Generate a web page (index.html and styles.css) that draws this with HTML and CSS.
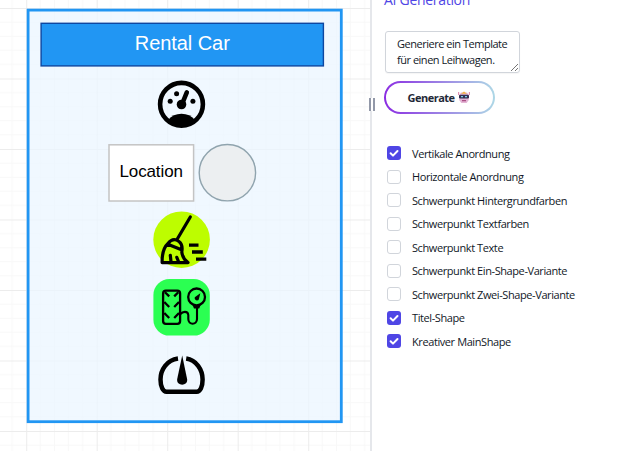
FILE: index.html
```html
<!DOCTYPE html>
<html lang="de">
<head>
<meta charset="utf-8">
<title>AI Generation</title>
<link rel="stylesheet" href="styles.css">
</head>
<body>
<main class="app">
  <section class="canvas">
    <svg class="diagram" width="370" height="451" viewBox="0 0 370 451">
      <defs>
        <pattern id="grid" x="26.2" y="8" width="70.5" height="70.5" patternUnits="userSpaceOnUse">
          <path d="M14.1 0V70.5M28.2 0V70.5M42.3 0V70.5M56.4 0V70.5M0 14.1H70.5M0 28.2H70.5M0 42.3H70.5M0 56.4H70.5" class="grid-minor"/>
          <path d="M.5 0V70.5M0 .5H70.5" class="grid-major"/>
        </pattern>
      </defs>
      <rect width="370" height="451" fill="url(#grid)"/>
      <rect class="card" x="28.1" y="10.1" width="313.2" height="411.6"/>
      <rect class="title-shape" x="41.1" y="23.3" width="282.3" height="42.6"/>
      <text class="title-text" x="182.3" y="49.8" textLength="95">Rental Car</text>

      <g>
        <circle cx="181.5" cy="104.3" r="21.4" fill="none" stroke="#000" stroke-width="4.6"/>
        <path d="M168.3 119.8Q173 113.7 181.5 113.7T194.7 119.8Q189.5 126.7 181.5 126.7T168.3 119.8Z"/>
        <circle cx="181.5" cy="104.5" r="4.8"/>
        <path d="M182.5 103 186.8 92.3" stroke="#000" stroke-width="4.6" stroke-linecap="round"/>
        <circle cx="170.2" cy="101.3" r="2.5"/><circle cx="176.6" cy="93.8" r="2.5"/><circle cx="192.9" cy="101.3" r="2.5"/>
      </g>

      <rect class="location" x="109" y="144.8" width="84.6" height="56.2"/>
      <text class="location-text" x="151.2" y="177.1" textLength="63.5">Location</text>
      <circle class="dot" cx="227.4" cy="172.7" r="28.2"/>

      <circle cx="181.6" cy="239.7" r="28.3" fill="#bdfd00"/>
      <g fill="none" stroke="#000" stroke-width="3.2" stroke-linecap="round" stroke-linejoin="round">
        <path d="M190.3 217 177 239.5"/>
        <path d="M168 243.5C171 239.5 175 238.5 179 241.5 182.5 244 182.5 248 181.8 252 182.4 257 184.6 260.2 188 262.6H162.1C162 254 163.5 247.5 168 243.5ZM167.8 244.3 181.5 249.8M170.3 255.3 171 261.5M176.8 257.3 178.5 261.5"/>
        <path d="M189 245.1H198.5M192 252H202.8M196 259.1H206.3" stroke-linecap="butt" stroke-width="3.4"/>
      </g>

      <rect x="153.4" y="279" width="56.4" height="56.6" rx="16" fill="#2bff52"/>
      <g fill="none" stroke="#000" stroke-width="2.3" stroke-linejoin="round">
        <rect x="163.1" y="290.7" width="17" height="33.2" rx="2.8"/>
        <path d="M165 292.2 169.2 296.4M178.3 292.2 174.2 296.4M164.3 302 169.2 307M179 302 174.2 307M164.3 313 169.2 318M179 313 174.2 318"/>
        <path d="M180.5 314C182.5 311.4 187.8 310.6 188.3 315V319C188.3 325.3 197 325.3 197 319V307" stroke-width="2.1"/>
        <circle cx="196.6" cy="296.9" r="8.4"/>
        <path d="M192.7 305.2H200.6L199.2 308.5H194Z" fill="#000" stroke="none"/>
        <path d="M200.3 293.3 198.8 299.3C198.2 301.6 193.7 300.3 194.8 297.3Z" fill="#000" stroke="none"/>
      </g>

      <path d="M178 358.5C167 360 160.5 369.5 160.5 379.5 160.5 386.5 163 391.7 166.5 391.7H196.7C200.3 391.7 202.6 386.5 202.6 379.5 202.6 369.5 196.2 360 186.2 358.5" fill="none" stroke="#000" stroke-width="4.5"/>
      <path d="M182.2 355.5 177.2 379C175.9 386.5 188.4 386.5 187.1 379Z"/>
    </svg>
  </section>
  <div class="divider"><div class="handle"></div></div>
  <aside class="panel">
    <h1 class="heading">AI Generation</h1>
    <div class="prompt">Generiere ein Template<br>für einen Leihwagen.
      <svg class="grip" width="9" height="9" viewBox="0 0 9 9"><path d="M1 8 8 1M5 8 8 5"/></svg>
    </div>
    <button class="generate"><span>Generate</span>
      <svg width="12" height="13" viewBox="0 0 12 13">
        <path d="M.6 1V4M11.4 1V4" stroke="#e291b5" stroke-width="1.2"/>
        <path d="M1.2 4 3 1.5H9L10.8 4V9L8.7 12H3.3L1.2 9Z" fill="#e3b4d5"/>
        <path d="M3 2.7 6 .5 9 2.7Z" fill="#f3b443"/>
        <rect x="1" y="3.7" width="10" height="3.8" rx="1.2" fill="#343052"/>
        <path d="M3 5.6H5M7 5.6H9" stroke="#79cce8" stroke-width="1.1"/>
        <path d="M4 9.7H8" stroke="#a13d77" stroke-width="1.1"/>
      </svg>
    </button>
    <ul class="options">
      <li><svg class="box on" viewBox="0 0 14 14"><path d="M3.6 7.3 6 9.6 10.5 5"/></svg><span>Vertikale Anordnung</span></li>
      <li><i class="box"></i><span>Horizontale Anordnung</span></li>
      <li><i class="box"></i><span>Schwerpunkt Hintergrundfarben</span></li>
      <li><i class="box"></i><span>Schwerpunkt Textfarben</span></li>
      <li><i class="box"></i><span>Schwerpunkt Texte</span></li>
      <li><i class="box"></i><span>Schwerpunkt Ein-Shape-Variante</span></li>
      <li><i class="box"></i><span>Schwerpunkt Zwei-Shape-Variante</span></li>
      <li><svg class="box on" viewBox="0 0 14 14"><path d="M3.6 7.3 6 9.6 10.5 5"/></svg><span>Titel-Shape</span></li>
      <li><svg class="box on" viewBox="0 0 14 14"><path d="M3.6 7.3 6 9.6 10.5 5"/></svg><span>Kreativer MainShape</span></li>
    </ul>
  </aside>
</main>
</body>
</html>
```
FILE: styles.css
```css
* { box-sizing: border-box; }
body { margin: 0; background: #fff; overflow: hidden; font-family: "Open Sans", "Noto Sans", sans-serif; color: #111827; }
.app { display: flex; width: 620px; height: 451px; }
.canvas { width: 370px; }
.diagram { display: block; }
.grid-minor { stroke: #f8f8f8; stroke-width: 1; }
.grid-major { stroke: #ececec; stroke-width: 1; }
.card { fill: rgba(235, 245, 255, .75); stroke: #2196f3; stroke-width: 2.8; }
.title-shape { fill: #2196f3; stroke: #0d47a1; stroke-width: 1.4; }
.title-text, .location-text { font-family: "Liberation Sans", Arial, sans-serif; text-anchor: middle; }
.title-text { font-size: 20px; fill: #fff; }
.location-text { font-size: 17px; fill: #000; }
.location { fill: #fff; stroke: #c4c4c4; stroke-width: 1.5; }
.dot { fill: #eceff1; stroke: #90a4ae; stroke-width: 1.4; }
.divider { width: 2px; background: #e5e7eb; display: flex; justify-content: center; }
.handle { flex: none; width: 6px; height: 13px; margin: 98px 0 0 1px; background: #fff; border: solid #9298a8; border-width: 0 2px; }
.panel { flex: 1; padding-left: 12px; }
.heading { margin: -10px 0 0; font-size: 14px; line-height: 20px; font-weight: 400; color: #4f46e5; letter-spacing: -.3px; height: 41px; }
.prompt { position: relative; width: 135px; height: 42px; margin-left: 1px; padding: 4px 0 0 11px; border: 1px solid #d1d5db; border-radius: 3px; font-size: 11px; line-height: 16px; letter-spacing: -.48px; white-space: nowrap; box-shadow: 0 1px 1px rgba(0, 0, 0, .04); }
.grip { position: absolute; right: 0; bottom: 0; fill: none; stroke: #666; stroke-width: .9; }
.generate { display: flex; align-items: center; justify-content: center; gap: 3px; width: 111px; height: 33px; margin: 8px 0 0; padding: 0 2px 0 0; border: 2px solid transparent; border-radius: 17px; background: linear-gradient(#fff, #fff) padding-box, linear-gradient(90deg, #8a2be2, #add8e6) border-box; font: 700 11px "Open Sans", sans-serif; letter-spacing: -.5px; color: #1f2937; }
.options { list-style: none; margin: 27.4px 0 0; padding: 0 0 0 3px; }
.options li { display: flex; align-items: center; gap: 11px; height: 23.5px; font-size: 11px; letter-spacing: -.41px; white-space: nowrap; }
.box { flex: none; width: 14px; height: 14px; border: 1px solid #d1d5db; border-radius: 3px; background: #fff; }
.on { border: 0; background: #4f46e5; fill: none; stroke: #fff; stroke-width: 2; stroke-linecap: round; stroke-linejoin: round; }
```
